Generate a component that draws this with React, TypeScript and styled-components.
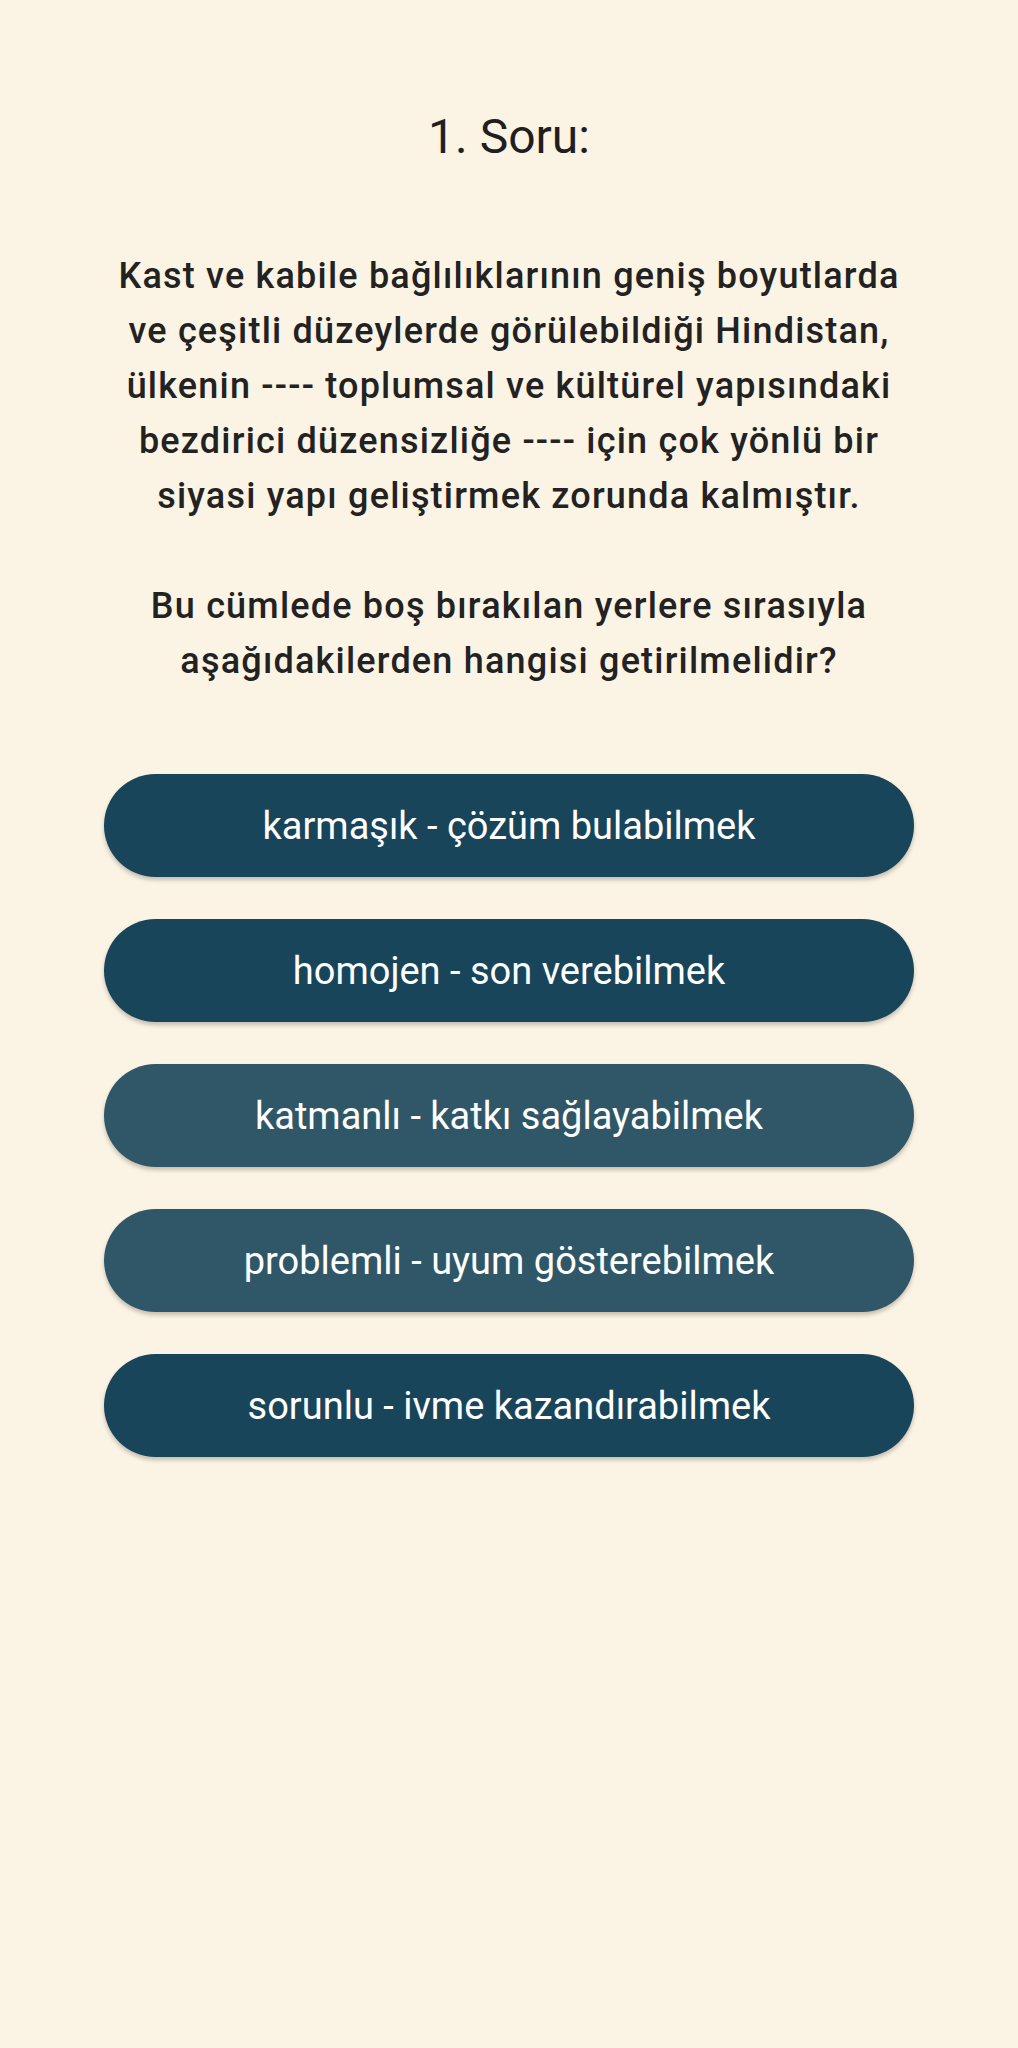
import React from "react";
import styled, { createGlobalStyle } from "styled-components";

const GlobalStyle = createGlobalStyle`
  html, body {
    margin: 0;
    padding: 0;
    background: #fbf3e3;
  }
  body {
    font-family: Roboto, "Noto Sans", "Liberation Sans", sans-serif;
    color: #222222;
  }
`;

const Page = styled.main`
  min-height: 2048px;
  background: #fbf3e3;
  display: flex;
  flex-direction: column;
  align-items: center;
  padding-top: 109px;
  box-sizing: border-box;
`;

const Title = styled.h1`
  margin: 0;
  font-size: 48px;
  font-weight: 400;
  line-height: 56px;
  color: #1f1f1f;
  text-align: center;
`;

const Question = styled.p`
  margin: 84px 0 0;
  width: 810px;
  font-size: 36px;
  font-weight: 500;
  letter-spacing: 1.2px;
  line-height: 55px;
  color: #222222;
  text-align: center;
`;

const Line = styled.span`
  display: block;
  white-space: nowrap;
  min-height: 55px;
`;

const Options = styled.div`
  margin-top: 85px;
  width: 810px;
  display: flex;
  flex-direction: column;
  gap: 42px;
`;

const OptionButton = styled.button<{ $light?: boolean }>`
  height: 103px;
  width: 100%;
  border: none;
  border-radius: 52px;
  background: ${(p) => (p.$light ? "#2f5768" : "#18455a")};
  color: #ffffff;
  font-family: Roboto, "Noto Sans", "Liberation Sans", sans-serif;
  font-size: 38px;
  font-weight: 400;
  display: flex;
  align-items: center;
  justify-content: center;
  box-shadow: 0 3px 4px rgba(0, 0, 0, 0.22);
  cursor: pointer;
  padding: 0 24px;
`;

const lines = [
  "Kast ve kabile bağlılıklarının geniş boyutlarda",
  "ve çeşitli düzeylerde görülebildiği Hindistan,",
  "ülkenin ---- toplumsal ve kültürel yapısındaki",
  "bezdirici düzensizliğe ---- için çok yönlü bir",
  "siyasi yapı geliştirmek zorunda kalmıştır.",
  "",
  "Bu cümlede boş bırakılan yerlere sırasıyla",
  "aşağıdakilerden hangisi getirilmelidir?",
];

const options: { text: string; light?: boolean }[] = [
  { text: "karmaşık - çözüm bulabilmek" },
  { text: "homojen - son verebilmek" },
  { text: "katmanlı - katkı sağlayabilmek", light: true },
  { text: "problemli - uyum gösterebilmek", light: true },
  { text: "sorunlu - ivme kazandırabilmek" },
];

export default function App() {
  return (
    <>
      <GlobalStyle />
      <Page>
        <Title>1. Soru:</Title>
        <Question>
          {lines.map((l, i) => (
            <Line key={i}>{l}</Line>
          ))}
        </Question>
        <Options>
          {options.map((o) => (
            <OptionButton key={o.text} $light={o.light}>
              {o.text}
            </OptionButton>
          ))}
        </Options>
      </Page>
    </>
  );
}
